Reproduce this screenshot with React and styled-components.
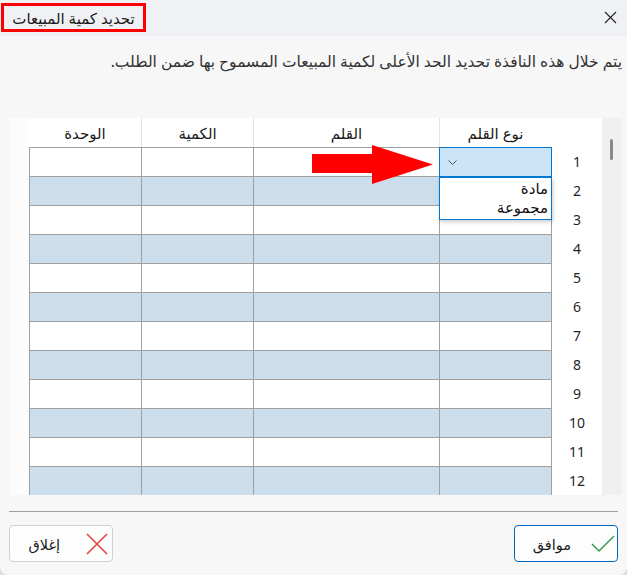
import React from 'react';
import styled, { createGlobalStyle } from 'styled-components';

const GlobalStyle = createGlobalStyle`
  html, body {
    margin: 0;
    padding: 0;
    background: #dcdcdc;
  }
  * {
    box-sizing: border-box;
  }
`;

const Window = styled.div`
  width: 627px;
  height: 575px;
  background: #f7f7f7;
  display: flex;
  flex-direction: column;
  font-family: "Noto Sans", "DejaVu Sans", sans-serif;
  color: #1a1a1a;
  border-radius: 0 0 8px 8px;
  overflow: hidden;
  position: relative;
`;

const TitleBar = styled.div`
  height: 36px;
  background: #eff1f4;
  display: flex;
  align-items: flex-start;
  justify-content: space-between;
  padding: 3px 10px 0 1px;
`;

const TitleBox = styled.div`
  width: 145px;
  height: 29px;
  border: 3px solid #ff0000;
  display: flex;
  align-items: center;
  justify-content: center;
  font-size: 15px;
  direction: rtl;
`;

const CloseIcon = styled.svg`
  margin-top: 8px;
  width: 13px;
  height: 13px;
`;

const Description = styled.p`
  margin: 0;
  padding: 14px 5px 0 0;
  height: 82px;
  direction: rtl;
  text-align: right;
  font-size: 15.5px;
  color: #333;
`;

const GridArea = styled.div`
  display: flex;
  height: 377px;
  margin: 0 5px 0 10px;
`;

const TablePanel = styled.div`
  flex: 1;
  background: #fcfcfc;
  position: relative;
  overflow: hidden;
`;

const Table = styled.div`
  direction: rtl;
  display: grid;
  grid-template-columns: 51px 112px 186px 112px 112px 1fr;
  grid-auto-rows: 29px;
`;

const HeadCell = styled.div`
  background: ${p => (p.$blank ? '#fcfcfc' : '#fff')};
  border-left: ${p => (p.$line ? '1px solid #e3e3e3' : 'none')};
  display: flex;
  align-items: center;
  justify-content: center;
  font-size: 15px;
  color: #1a1a1a;
`;

const NumCell = styled.div`
  background: #fff;
  border-left: 1px solid #a0a0a0;
  display: flex;
  align-items: center;
  justify-content: center;
  font-size: 14px;
  color: #1f1f1f;
`;

const Cell = styled.div`
  background: ${p => (p.$alt ? '#ccdeeb' : '#fff')};
  border-top: 1px solid #a0a0a0;
  border-left: 1px solid #a0a0a0;
  position: relative;
`;

const Spacer = styled.div`
  background: #fcfcfc;
`;

const Combo = styled.div`
  position: absolute;
  top: -1px;
  left: -1px;
  right: -1px;
  bottom: -1px;
  background: #cce4f7;
  border: 1px solid #0078d4;
  display: flex;
  align-items: center;
  justify-content: flex-end;
  padding-left: 8px;
  z-index: 2;
`;

const DropList = styled.div`
  position: absolute;
  top: 29px;
  left: -1px;
  right: -1px;
  background: #fff;
  border: 1px solid #0078d4;
  box-shadow: 1px 2px 4px rgba(0, 0, 0, 0.2);
  padding: 1px 3px 2px;
  z-index: 3;
  font-size: 15px;
  line-height: 19px;
  color: #111;
  text-align: right;
`;

const Arrow = styled.svg`
  position: absolute;
  left: 302px;
  top: 27px;
  width: 121px;
  height: 39px;
  z-index: 4;
`;

const Scrollbar = styled.div`
  width: 20px;
  background: #f0f0f0;
  padding: 21px 0 0 8px;
`;

const Thumb = styled.div`
  width: 3px;
  height: 21px;
  border-radius: 2px;
  background: #8a8a8a;
`;

const Footer = styled.div`
  margin: 16px 9px 0 9px;
  border-top: 1px solid #a0a0a0;
  padding-top: 13px;
  display: flex;
  justify-content: space-between;
`;

const Button = styled.button`
  width: 104px;
  height: 37px;
  direction: rtl;
  display: flex;
  align-items: center;
  justify-content: flex-start;
  gap: ${p => (p.$primary ? '20px' : '26px')};
  padding: 0 ${p => (p.$primary ? '2px' : '4px')} 0 0;
  background: #fdfdfd;
  border: 1px solid ${p => (p.$primary ? '#0067c0' : '#d0d0d0')};
  border-radius: 4px;
  font-family: "Noto Sans", "DejaVu Sans", sans-serif;
  font-size: 14.5px;
  color: #1a1a1a;
`;

const rows = Array.from({ length: 12 }, (_, i) => i + 1);
const heads = ['نوع القلم', 'القلم', 'الكمية', 'الوحدة'];

export default function App() {
  return (
    <>
      <GlobalStyle />
      <Window>
        <TitleBar>
          <TitleBox>تحديد كمية المبيعات</TitleBox>
          <CloseIcon viewBox="0 0 13 13">
            <path d="M1 1L12 12M12 1L1 12" stroke="#222" strokeWidth="1.1" />
          </CloseIcon>
        </TitleBar>
        <Description>
          يتم خلال هذه النافذة تحديد الحد الأعلى لكمية المبيعات المسموح بها ضمن الطلب.
        </Description>
        <GridArea>
          <TablePanel>
            <Table>
              <HeadCell />
              {heads.map((h, i) => (
                <HeadCell key={h} $line={i < 3}>{h}</HeadCell>
              ))}
              <HeadCell $blank />
              {rows.map(n => (
                <React.Fragment key={n}>
                  <NumCell>{n}</NumCell>
                  {heads.map((h, i) => (
                    <Cell key={h} $alt={n % 2 === 0}>
                      {n === 1 && i === 0 && (
                        <>
                          <Combo>
                            <svg width="9" height="5" viewBox="0 0 9 5">
                              <path d="M0.5 0.5L4.5 4.5L8.5 0.5" fill="none" stroke="#555" strokeWidth="1" />
                            </svg>
                          </Combo>
                          <DropList>
                            <div>مادة</div>
                            <div>مجموعة</div>
                          </DropList>
                        </>
                      )}
                    </Cell>
                  ))}
                  <Spacer />
                </React.Fragment>
              ))}
            </Table>
            <Arrow viewBox="0 0 121 39">
              <polygon points="0,9 60,9 60,0 121,19.5 60,39 60,28 0,28" fill="#ff0000" />
            </Arrow>
          </TablePanel>
          <Scrollbar>
            <Thumb />
          </Scrollbar>
        </GridArea>
        <Footer>
          <Button>
            <svg width="22" height="22" viewBox="0 0 22 22">
              <path d="M1 1L21 21M21 1L1 21" stroke="#e0443c" strokeWidth="1.6" />
            </svg>
            <span>إغلاق</span>
          </Button>
          <Button $primary>
            <svg width="24" height="18" viewBox="0 0 24 18">
              <path d="M1 9L8 16L23 1" fill="none" stroke="#3c9a4c" strokeWidth="1.5" />
            </svg>
            <span>موافق</span>
          </Button>
        </Footer>
      </Window>
    </>
  );
}
